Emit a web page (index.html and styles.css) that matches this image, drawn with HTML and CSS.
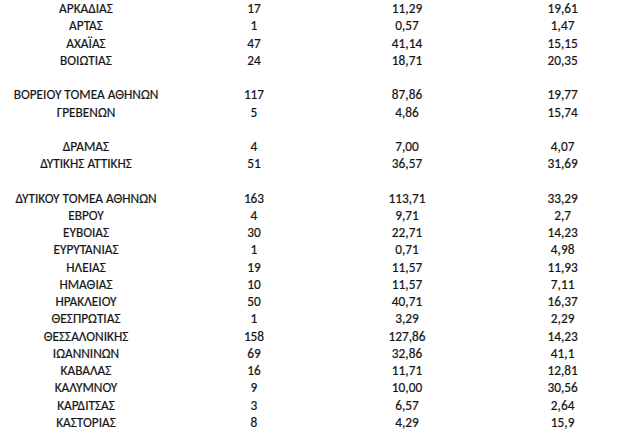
FILE: index.html
```html
<!DOCTYPE html>
<html lang="el">
<head>
<meta charset="utf-8">
<link rel="stylesheet" href="styles.css">
</head>
<body>
<div class="table">
  <div class="row"><span>ΑΡΚΑΔΙΑΣ</span><span>17</span><span>11,29</span><span>19,61</span></div>
  <div class="row"><span>ΑΡΤΑΣ</span><span>1</span><span>0,57</span><span>1,47</span></div>
  <div class="row"><span>ΑΧΑΪΑΣ</span><span>47</span><span>41,14</span><span>15,15</span></div>
  <div class="row"><span>ΒΟΙΩΤΙΑΣ</span><span>24</span><span>18,71</span><span>20,35</span></div>
  <div class="row blank"></div>
  <div class="row"><span>ΒΟΡΕΙΟΥ ΤΟΜΕΑ ΑΘΗΝΩΝ</span><span>117</span><span>87,86</span><span>19,77</span></div>
  <div class="row"><span>ΓΡΕΒΕΝΩΝ</span><span>5</span><span>4,86</span><span>15,74</span></div>
  <div class="row blank"></div>
  <div class="row"><span>ΔΡΑΜΑΣ</span><span>4</span><span>7,00</span><span>4,07</span></div>
  <div class="row"><span>ΔΥΤΙΚΗΣ ΑΤΤΙΚΗΣ</span><span>51</span><span>36,57</span><span>31,69</span></div>
  <div class="row blank"></div>
  <div class="row"><span>ΔΥΤΙΚΟΥ ΤΟΜΕΑ ΑΘΗΝΩΝ</span><span>163</span><span>113,71</span><span>33,29</span></div>
  <div class="row"><span>ΕΒΡΟΥ</span><span>4</span><span>9,71</span><span>2,7</span></div>
  <div class="row"><span>ΕΥΒΟΙΑΣ</span><span>30</span><span>22,71</span><span>14,23</span></div>
  <div class="row"><span>ΕΥΡΥΤΑΝΙΑΣ</span><span>1</span><span>0,71</span><span>4,98</span></div>
  <div class="row"><span>ΗΛΕΙΑΣ</span><span>19</span><span>11,57</span><span>11,93</span></div>
  <div class="row"><span>ΗΜΑΘΙΑΣ</span><span>10</span><span>11,57</span><span>7,11</span></div>
  <div class="row"><span>ΗΡΑΚΛΕΙΟΥ</span><span>50</span><span>40,71</span><span>16,37</span></div>
  <div class="row"><span>ΘΕΣΠΡΩΤΙΑΣ</span><span>1</span><span>3,29</span><span>2,29</span></div>
  <div class="row"><span>ΘΕΣΣΑΛΟΝΙΚΗΣ</span><span>158</span><span>127,86</span><span>14,23</span></div>
  <div class="row"><span>ΙΩΑΝΝΙΝΩΝ</span><span>69</span><span>32,86</span><span>41,1</span></div>
  <div class="row"><span>ΚΑΒΑΛΑΣ</span><span>16</span><span>11,71</span><span>12,81</span></div>
  <div class="row"><span>ΚΑΛΥΜΝΟΥ</span><span>9</span><span>10,00</span><span>30,56</span></div>
  <div class="row"><span>ΚΑΡΔΙΤΣΑΣ</span><span>3</span><span>6,57</span><span>2,64</span></div>
  <div class="row"><span>ΚΑΣΤΟΡΙΑΣ</span><span>8</span><span>4,29</span><span>15,9</span></div>
</div>
</body>
</html>
```
FILE: styles.css
```css
html, body {
  margin: 0;
  padding: 0;
  background: #ffffff;
  overflow: hidden;
}
body {
  font-family: "Carlito", "Liberation Sans Narrow", "Open Sans", sans-serif;
  font-size: 14px;
  color: #141414;
}
.table {
  display: flex;
  flex-direction: column;
  width: 632px;
}
.row {
  display: grid;
  grid-template-columns: 172px 164px 142px 154px;
  height: 17.24px;
  line-height: 17px;
  align-items: center;
}
.row span {
  text-align: center;
  white-space: nowrap;
  transform: scaleX(0.95);
  -webkit-text-stroke: 0.2px #141414;
}
.row span:last-child {
  padding-left: 16px;
}
```
